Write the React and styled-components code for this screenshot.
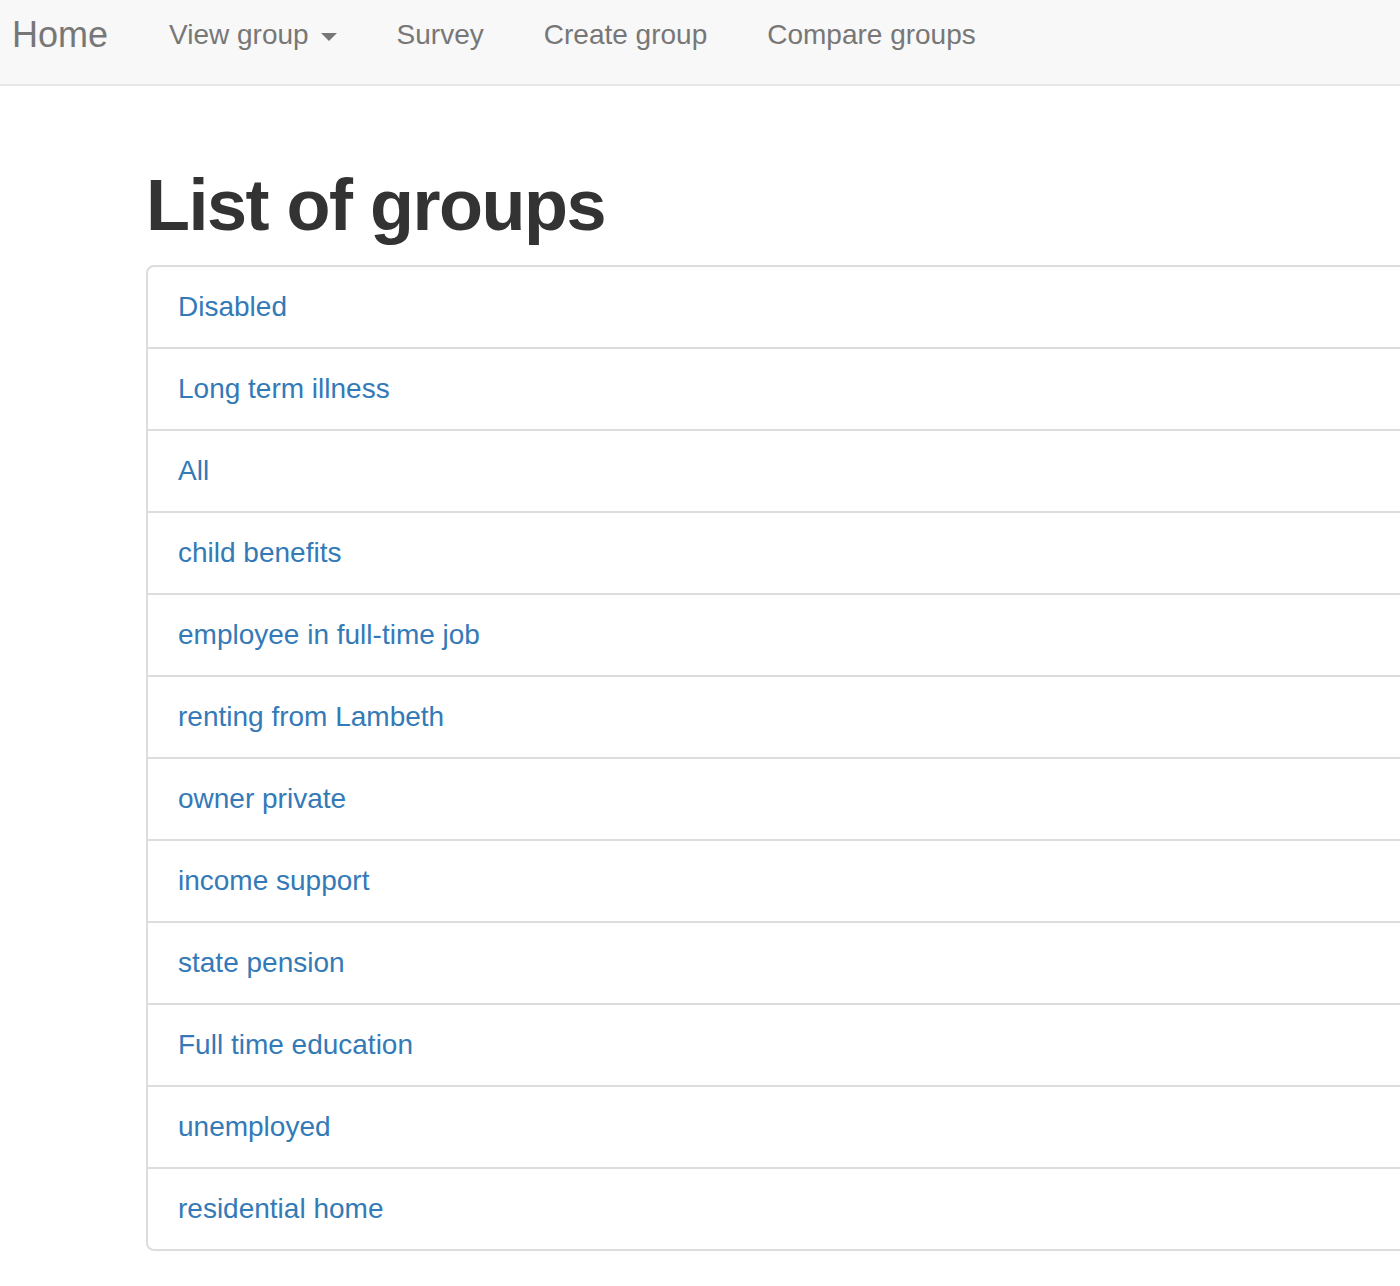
import React from "react";
import styled, { createGlobalStyle } from "styled-components";

const GlobalStyle = createGlobalStyle`
  html, body {
    margin: 0;
    padding: 0;
    background: #ffffff;
  }

  body {
    font-family: "Liberation Sans", Helvetica, Arial, sans-serif;
    color: #333333;
    overflow-x: hidden;
  }
`;

const Page = styled.div`
  width: 100%;
  overflow: hidden;
`;

const Navbar = styled.nav`
  display: flex;
  align-items: flex-start;
  box-sizing: border-box;
  height: 86px;
  padding-top: 15px;
  background: #f8f8f8;
  border-bottom: 2px solid #e7e7e7;
`;

const Brand = styled.a`
  padding: 0 31px 0 12px;
  font-size: 36px;
  line-height: 40px;
  color: #777777;
  text-decoration: none;
`;

const NavList = styled.ul`
  display: flex;
  margin: 0;
  padding: 0;
  list-style: none;
`;

const NavLink = styled.a`
  display: block;
  padding: 0 30px;
  font-size: 28px;
  line-height: 40px;
  color: #777777;
  text-decoration: none;
`;

const Caret = styled.span`
  display: inline-block;
  width: 0;
  height: 0;
  margin-left: 12px;
  vertical-align: middle;
  border-top: 8px solid #777777;
  border-left: 8px solid transparent;
  border-right: 8px solid transparent;
`;

const Main = styled.main`
  padding: 80px 0 40px 146px;
`;

const Title = styled.h1`
  margin: 0 0 20px;
  font-size: 72px;
  font-weight: 700;
  letter-spacing: -1.5px;
  line-height: 1.1;
  color: #333333;
`;

const GroupList = styled.div`
  width: 1400px;
  border: 2px solid #dddddd;
  border-radius: 8px;
  background: #ffffff;
`;

const GroupItem = styled.a`
  display: block;
  padding: 20px 30px;
  font-size: 28px;
  line-height: 40px;
  color: #337ab7;
  text-decoration: none;

  & + & {
    border-top: 2px solid #dddddd;
  }
`;

const navItems = [
  { label: "View group", dropdown: true },
  { label: "Survey" },
  { label: "Create group" },
  { label: "Compare groups" },
];

const groups = [
  "Disabled",
  "Long term illness",
  "All",
  "child benefits",
  "employee in full-time job",
  "renting from Lambeth",
  "owner private",
  "income support",
  "state pension",
  "Full time education",
  "unemployed",
  "residential home",
];

export default function App() {
  return (
    <Page>
      <GlobalStyle />
      <Navbar>
        <Brand href="#">Home</Brand>
        <NavList>
          {navItems.map((item) => (
            <li key={item.label}>
              <NavLink href="#">
                {item.label}
                {item.dropdown && <Caret />}
              </NavLink>
            </li>
          ))}
        </NavList>
      </Navbar>
      <Main>
        <Title>List of groups</Title>
        <GroupList>
          {groups.map((group) => (
            <GroupItem key={group} href="#">
              {group}
            </GroupItem>
          ))}
        </GroupList>
      </Main>
    </Page>
  );
}
